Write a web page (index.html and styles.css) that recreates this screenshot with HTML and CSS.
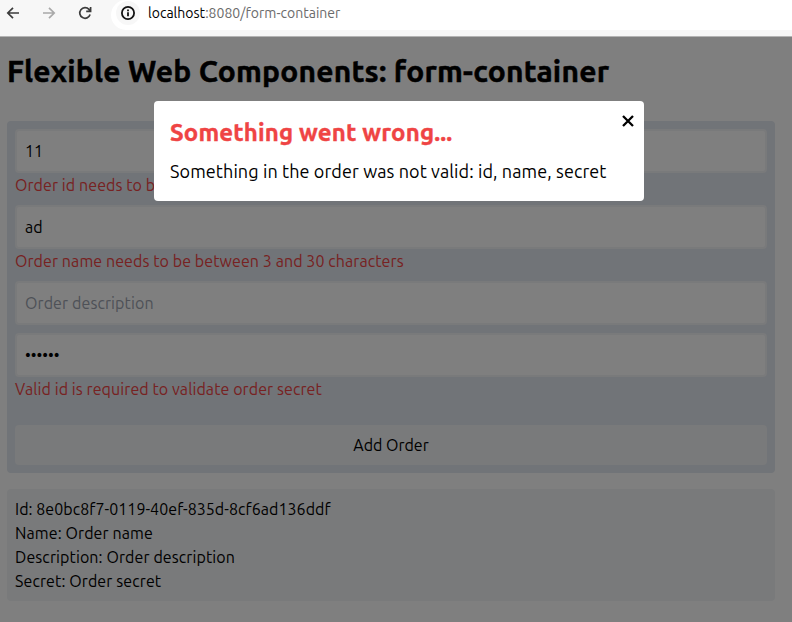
FILE: index.html
```html
<!DOCTYPE html>
<html lang="en">
<head>
<meta charset="utf-8">
<title>form-container</title>
<link rel="stylesheet" href="styles.css">
</head>
<body>
<header class="toolbar">
  <svg class="nav-icon" viewBox="0 0 16 16"><path d="M14 8H3M8 2.8L2.8 8L8 13.2"/></svg>
  <svg class="nav-icon disabled" viewBox="0 0 16 16"><path d="M2 8H13M8 2.8L13.2 8L8 13.2"/></svg>
  <svg class="nav-icon" viewBox="0 0 16 16"><path d="M13.1 9.6A5.3 5.3 0 1 1 12 4.4L13.4 6M13.6 2V6.3H9.2"/></svg>
  <div class="address">
    <span class="info"><svg viewBox="0 0 16 16"><circle cx="8" cy="8" r="6.1"/><path d="M8 7.3V11.2M8 4.6V6.2"/></svg></span>
    <span class="url"><b>localhost</b>:8080/form-container</span>
  </div>
</header>
<main class="page">
  <h1>Flexible Web Components: form-container</h1>
  <form class="order-form">
    <div class="field"><input type="text" value="11"><p class="error">Order id needs to be</p></div>
    <div class="field"><input type="text" value="ad"><p class="error">Order name needs to be between 3 and 30 characters</p></div>
    <div class="field"><input type="text" placeholder="Order description"></div>
    <div class="field"><input type="text" value="••••••"><p class="error">Valid id is required to validate order secret</p></div>
    <button class="submit" type="button">Add Order</button>
  </form>
  <section class="order">
    <p class="order-id">Id: 8e0bc8f7-0119-40ef-835d-8cf6ad136ddf</p>
    <p>Name: Order name</p>
    <p>Description: Order description</p>
    <p>Secret: Order secret</p>
  </section>
  <div class="overlay">
    <div class="dialog">
      <h2>Something went wrong...</h2>
      <p>Something in the order was not valid: id, name, secret</p>
      <svg class="close" viewBox="0 0 12 12"><path d="M1 1L11 11M11 1L1 11"/></svg>
    </div>
  </div>
</main>
</body>
</html>
```
FILE: styles.css
```css
* { box-sizing: border-box; margin: 0; }
body {
  height: 622px; overflow: hidden; display: flex; flex-direction: column;
  font: 16px/24px Ubuntu, "Noto Sans", sans-serif; color: #000; background: #fff;
}
.toolbar {
  height: 37px; flex: none; display: flex; align-items: flex-start;
  background: #f7f7f7; border-bottom: 1px solid #b4b4b4; padding-left: 5px;
}
.nav-icon { width: 16px; height: 16px; margin: 5px 20px 0 0; fill: none; stroke: #3c3c3c; stroke-width: 1.7; }
.nav-icon.disabled { stroke: #a9a9a9; }
.address {
  flex: 1; height: 30px; margin-left: -2px; padding: 0 0 4px 5px; display: flex; align-items: center; gap: 8px;
  background: #fff; border-bottom-left-radius: 17px; border-top-left-radius: 17px;
}
.info { width: 24px; height: 24px; border-radius: 50%; background: #f7f7f7; display: grid; place-items: center; }
.info svg { width: 16px; height: 16px; fill: none; stroke: #111; stroke-width: 1.8; }
.url { font-size: 14px; letter-spacing: 0.02px; color: #6b6b6b; }
.url b { font-weight: 400; color: #000; }
.page { position: relative; flex: 1; padding: 16px 17px 0 7px; }
h1 { font-size: 30px; line-height: 36px; font-weight: 700; letter-spacing: 0.2px; -webkit-text-stroke: 0.5px; white-space: nowrap; }
.order-form { height: 352px; margin-top: 32px; padding: 8px; border-radius: 4px; background: #e2e8f0; }
.field { margin-bottom: 8px; }
input {
  display: block; width: 100%; height: 44px; padding: 0 8px; border: 2px solid #f3f4f6; border-radius: 4px;
  background: #fff; color: #000; font: inherit;
}
input::placeholder { color: #9ca3af; opacity: 1; letter-spacing: 0.1px; }
.error { color: #ef4444; letter-spacing: 0.08px; }
.submit {
  width: 100%; height: 40px; margin-top: 16px; border: 0; border-radius: 4px;
  background: #f3f4f6; color: #000; font: inherit;
}
.order { margin-top: 16px; padding: 8px; border-radius: 4px; background: #f3f4f6; letter-spacing: 0.1px; }
.order-id { letter-spacing: 0.05px; }
.overlay {
  position: absolute; inset: 0; background: rgba(0, 0, 0, 0.5);
  display: flex; align-items: flex-start; padding: 64px 0 0 154px;
}
.dialog { position: relative; width: 490px; height: 100px; padding: 16px; border-radius: 4px; background: #fff; white-space: nowrap; }
.dialog h2 { font-size: 24px; line-height: 32px; color: #ef4444; letter-spacing: 0.16px; -webkit-text-stroke: 0.4px; }
.dialog p { margin-top: 8px; font-size: 18px; line-height: 28px; letter-spacing: 0.1px; }
.close { position: absolute; top: 14px; right: 10.5px; width: 12px; height: 12px; fill: none; stroke: #000; stroke-width: 2.3; }
```
